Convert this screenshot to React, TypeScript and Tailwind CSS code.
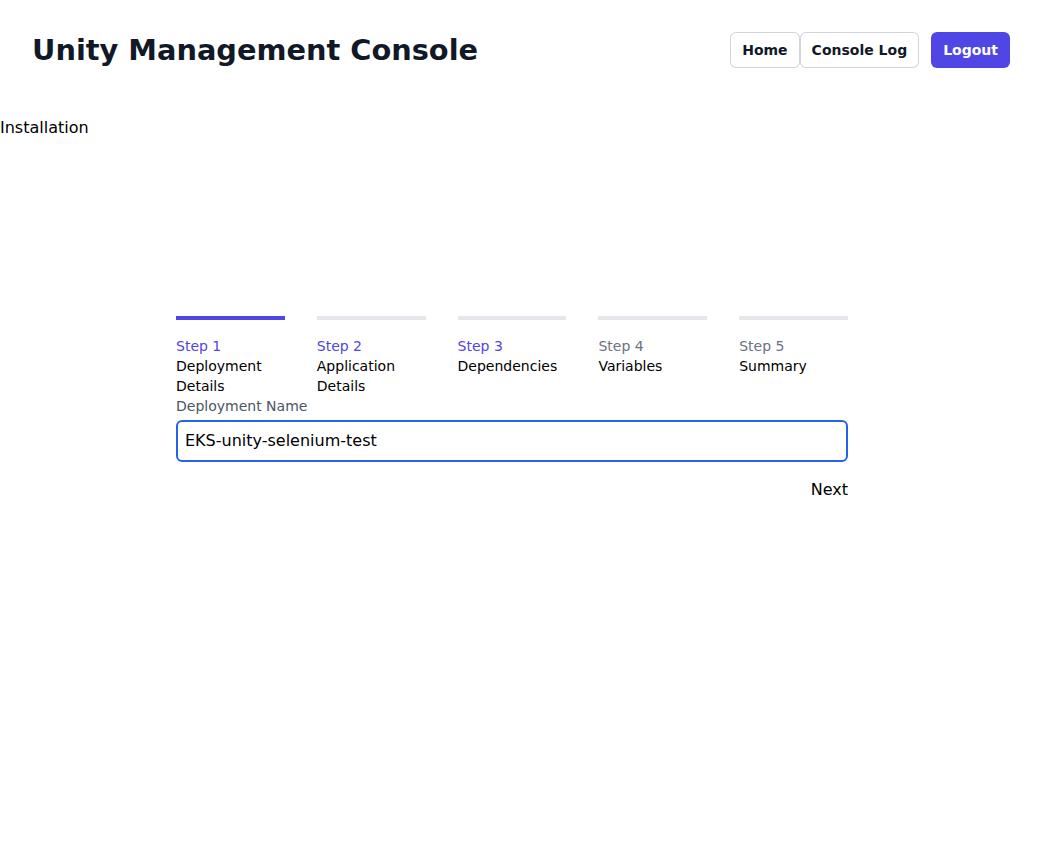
import React, { useEffect, useRef } from "react";

interface Step {
  label: string;
  title: string;
}

const steps: Step[] = [
  { label: "Step 1", title: "Deployment Details" },
  { label: "Step 2", title: "Application Details" },
  { label: "Step 3", title: "Dependencies" },
  { label: "Step 4", title: "Variables" },
  { label: "Step 5", title: "Summary" },
];

const currentStep = 0;
const reachedStep = 2;

const App: React.FC = () => {
  const inputRef = useRef<HTMLInputElement>(null);

  useEffect(() => {
    const el = inputRef.current;
    if (el) {
      el.focus();
      const end = el.value.length;
      el.setSelectionRange(end, end);
    }
  }, []);

  return (
    <div className="min-h-screen bg-white font-['DejaVu_Sans',sans-serif] text-black">
      <header className="flex items-center justify-between px-8 py-8">
        <h1 className="text-[28.8px] font-bold leading-9 text-[#111827]">
          Unity Management Console
        </h1>
        <nav className="flex items-center gap-3">
          <div className="flex">
            <button className="rounded-md bg-white px-3 py-2 text-sm leading-5 font-bold text-[#111827] ring-1 ring-inset ring-[#d1d5db]">
              Home
            </button>
            <button className="rounded-md bg-white px-3 py-2 text-sm leading-5 font-bold text-[#111827] ring-1 ring-inset ring-[#d1d5db]">
              Console Log
            </button>
          </div>
          <button className="rounded-md bg-[#4f46e5] px-3 py-2 text-sm leading-5 font-bold text-white">
            Logout
          </button>
        </nav>
      </header>

      <div className="mt-4 text-base">Installation</div>

      <div className="ml-[176px] mt-[176px] w-[672px]">
        <ol className="flex gap-8">
          {steps.map((step, i) => (
            <li key={step.label} className="flex-1">
              <div
                className={
                  i === currentStep ? "h-1 bg-[#4f46e5]" : "h-1 bg-[#e5e7eb]"
                }
              />
              <div className="pt-4 text-sm">
                <div
                  className={
                    i <= reachedStep ? "text-[#4f46e5]" : "text-[#6b7280]"
                  }
                >
                  {step.label}
                </div>
                <div className="text-black">{step.title}</div>
              </div>
            </li>
          ))}
        </ol>

        <label className="block text-sm text-[#4b5563]" htmlFor="deployment-name">
          Deployment Name
        </label>
        <input
          id="deployment-name"
          ref={inputRef}
          defaultValue="EKS-unity-selenium-test"
          className="mt-1 block w-full rounded-md border-2 border-[#2563eb] px-[7px] py-[7px] text-base leading-6 outline-none"
        />

        <div className="mt-4 flex justify-end">
          <button className="text-base">Next</button>
        </div>
      </div>
    </div>
  );
};

export default App;
